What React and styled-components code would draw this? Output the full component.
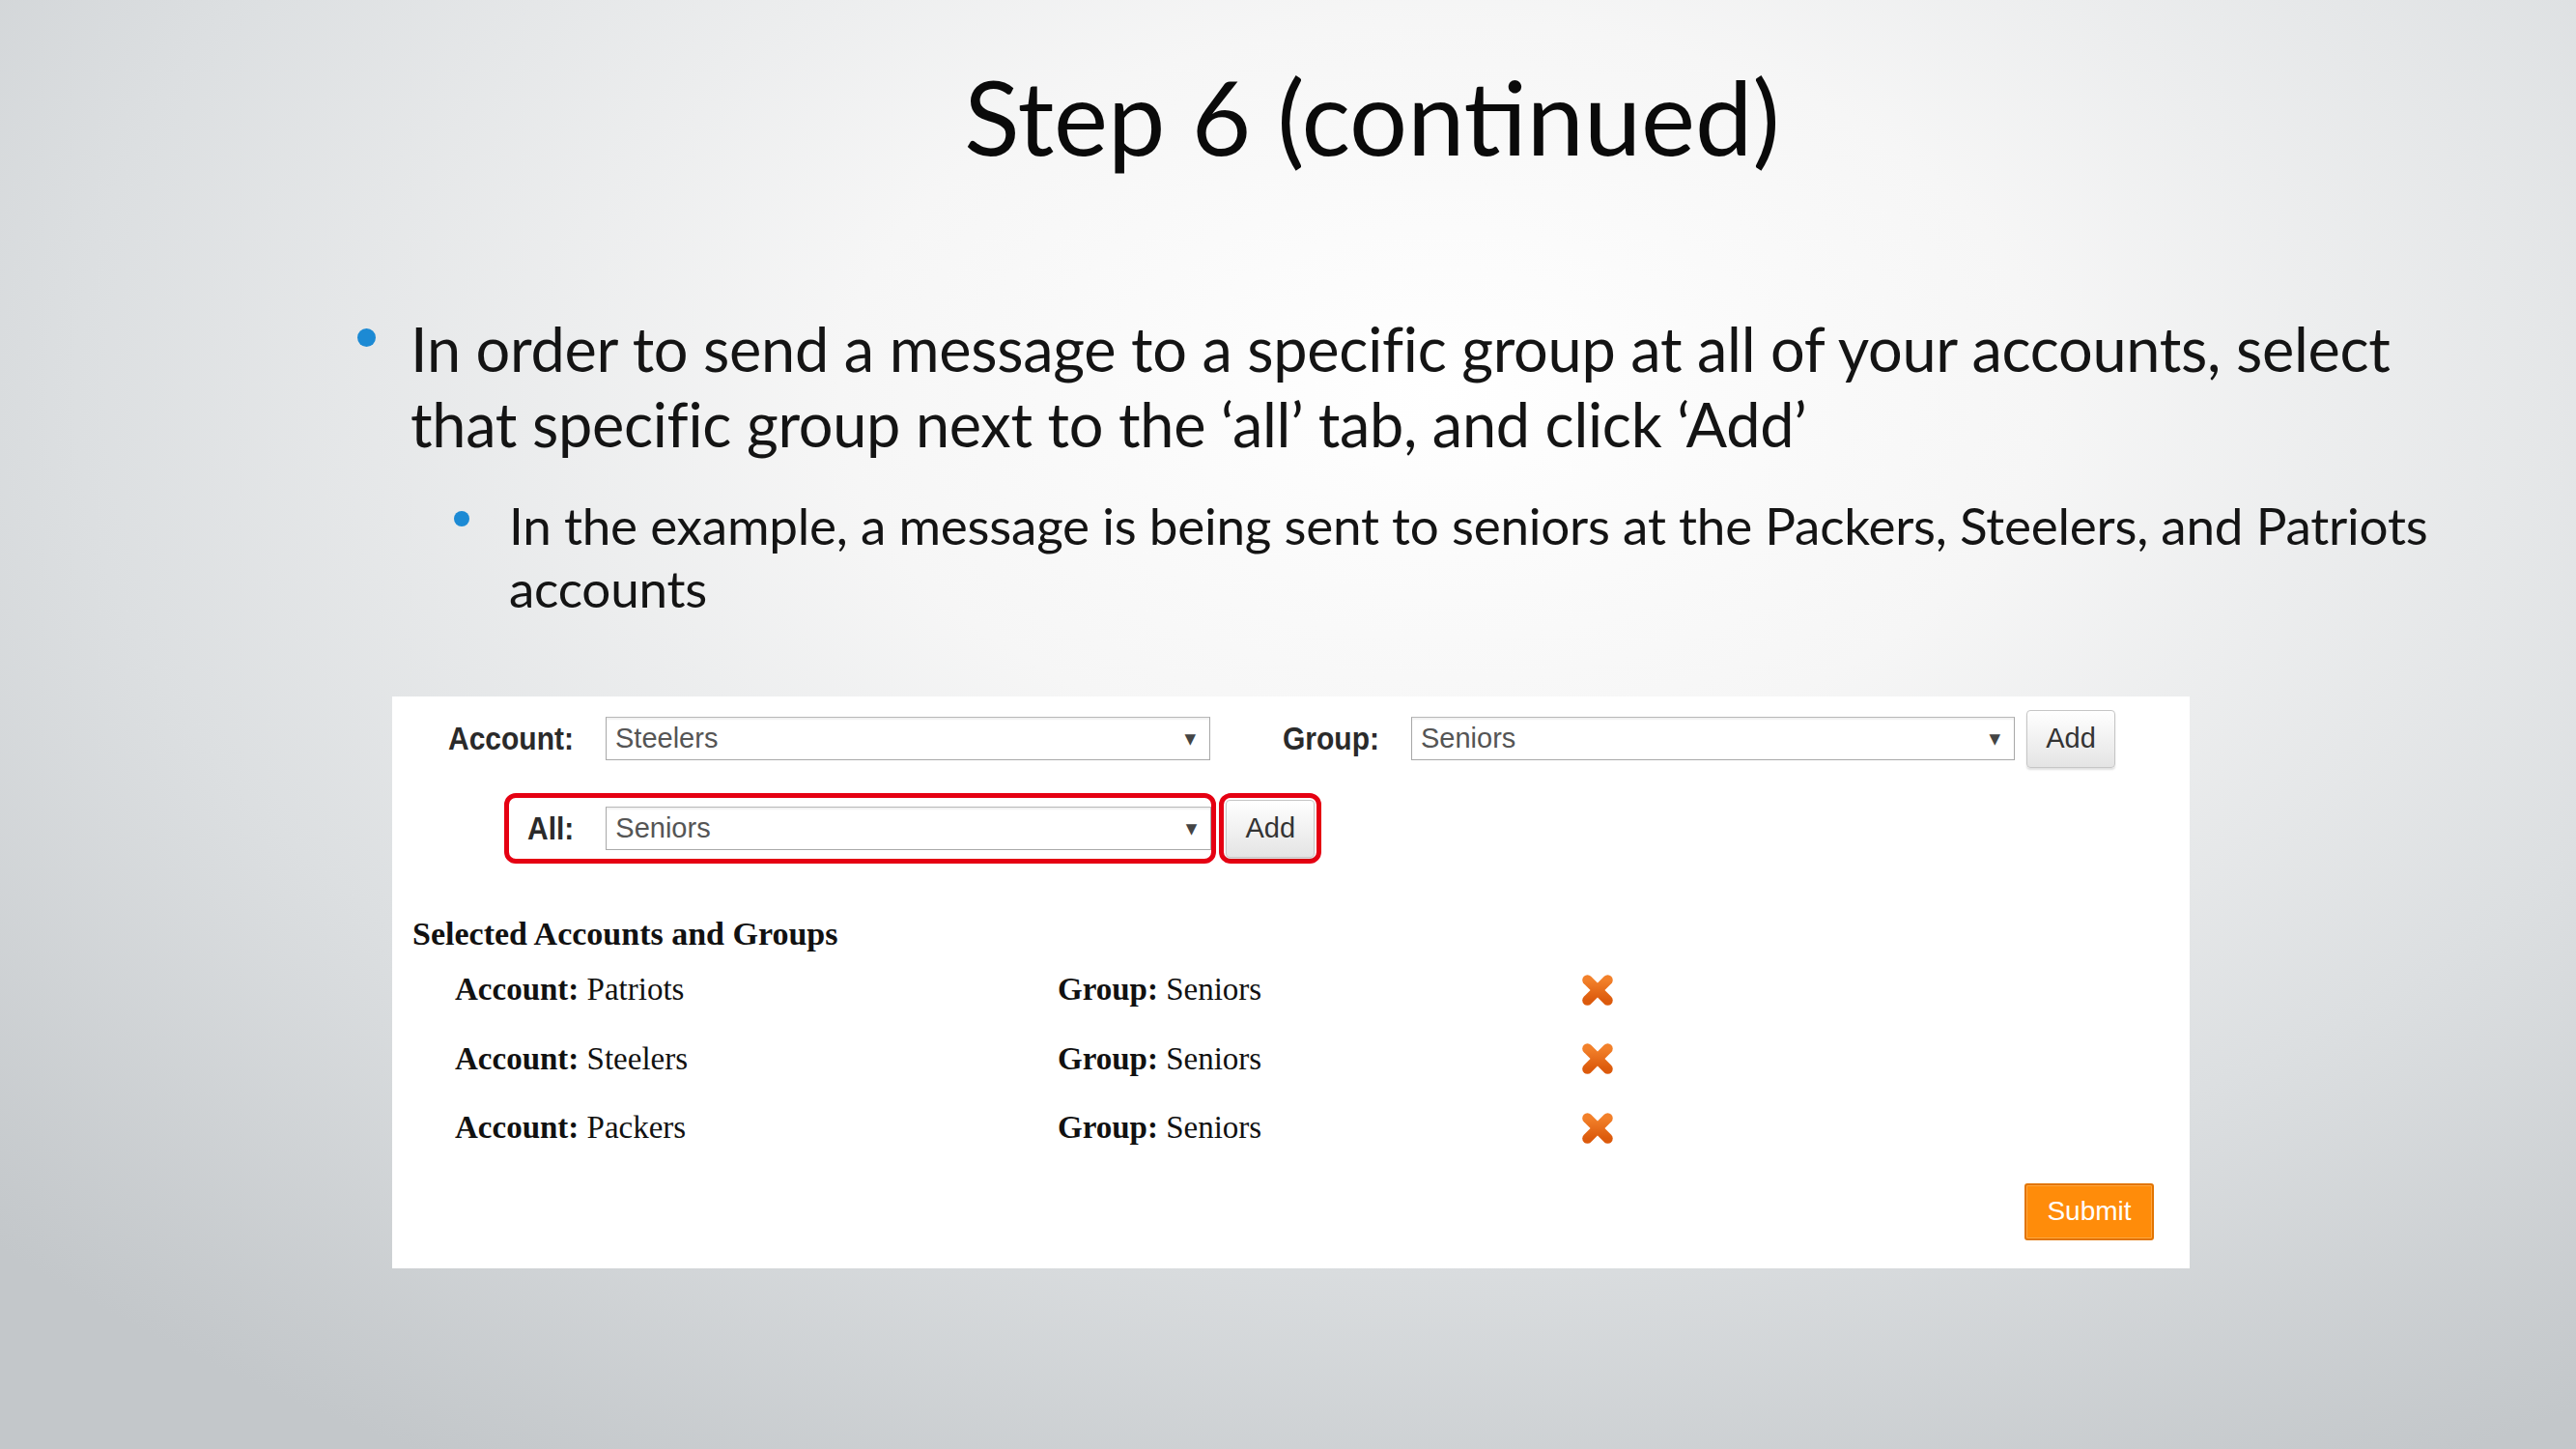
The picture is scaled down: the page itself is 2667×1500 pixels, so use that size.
import styled, { createGlobalStyle } from "styled-components"

const GlobalStyle = createGlobalStyle`
  html, body {
    margin: 0;
    padding: 0;
  }
  body {
    font-family: Lato, "Open Sans", sans-serif;
  }
`

const SELECTED = [
  { account: "Patriots", group: "Seniors" },
  { account: "Steelers", group: "Seniors" },
  { account: "Packers", group: "Seniors" },
]

function RemoveIcon() {
  return (
    <svg width="36" height="36" viewBox="0 0 24 24">
      <defs>
        <linearGradient id="xgrad" x1="0" y1="0" x2="0" y2="1">
          <stop offset="0" stopColor="#f2802a" />
          <stop offset="1" stopColor="#dc5a0c" />
        </linearGradient>
      </defs>
      <g stroke="url(#xgrad)" strokeWidth="7" strokeLinecap="round">
        <line x1="5" y1="5" x2="19" y2="19" />
        <line x1="19" y1="5" x2="5" y2="19" />
      </g>
    </svg>
  )
}

function Select({ value, width }) {
  return (
    <SelectBox $width={width}>
      <span>{value}</span>
      <Arrow>▼</Arrow>
    </SelectBox>
  )
}

export default function App() {
  return (
    <>
      <GlobalStyle />
      <Slide>
        <Title>Step 6 (continued)</Title>

        <Bullet>
          <Dot />
          <BulletText>
            In order to send a message to a specific group at all of your accounts, select
            <br />
            that specific group next to the ‘all’ tab, and click ‘Add’
          </BulletText>
        </Bullet>

        <SubBullet>
          <SubDot />
          <SubText>
            In the example, a message is being sent to seniors at the Packers, Steelers, and Patriots
            <br />
            accounts
          </SubText>
        </SubBullet>

        <Panel>
          <FieldRow>
            <Label>Account:</Label>
            <Select value="Steelers" width={626} />
            <Label $gapLeft={75}>Group:</Label>
            <Select value="Seniors" width={625} />
            <AddButton $gapLeft={12}>Add</AddButton>
          </FieldRow>

          <AllRow>
            <Highlight $pad="0 0 0 19px">
              <Label>All:</Label>
              <Select value="Seniors" width={627} />
            </Highlight>
            <Highlight $pad="0 2px">
              <AddButton>Add</AddButton>
            </Highlight>
          </AllRow>

          <SectionTitle>Selected Accounts and Groups</SectionTitle>
          <SelectedList>
            {SELECTED.map((item) => (
              <SelectedRow key={item.account}>
                <span>
                  <b>Account:</b> {item.account}
                </span>
                <span>
                  <b>Group:</b> {item.group}
                </span>
                <RemoveIcon />
              </SelectedRow>
            ))}
          </SelectedList>

          <Footer>
            <SubmitButton>Submit</SubmitButton>
          </Footer>
        </Panel>
      </Slide>
    </>
  )
}

const Slide = styled.div`
  width: 2667px;
  height: 1500px;
  overflow: hidden;
  display: flex;
  flex-direction: column;
  background: radial-gradient(
    ellipse 78% 85% at 56% 27%,
    #ffffff 0%,
    #f6f6f6 30%,
    #dcdfe1 68%,
    #c3c7ca 100%
  );
  color: #111;
`

const Title = styled.h1`
  margin: 70px 0 0 0;
  padding-left: 174px;
  font-family: Lato, sans-serif;
  font-weight: 400;
  font-size: 106px;
  line-height: 100px;
  text-align: center;
  color: #0a0a0a;
`

const Bullet = styled.div`
  display: flex;
  align-items: flex-start;
  margin: 152px 0 0 370px;
`

const Dot = styled.span`
  flex: none;
  width: 19px;
  height: 19px;
  margin-top: 18px;
  margin-right: 36px;
  border-radius: 50%;
  background: #1c8ad4;
`

const BulletText = styled.div`
  font-size: 63px;
  line-height: 78px;
  letter-spacing: -0.28px;
  color: #141414;
  white-space: nowrap;
`

const SubBullet = styled.div`
  display: flex;
  align-items: flex-start;
  margin: 33px 0 0 470px;
`

const SubDot = styled(Dot)`
  width: 16px;
  height: 16px;
  margin-top: 18px;
  margin-right: 41px;
`

const SubText = styled.div`
  font-size: 53px;
  line-height: 65px;
  letter-spacing: -0.22px;
  color: #141414;
  white-space: nowrap;
`

const Panel = styled.div`
  margin: 80px 0 0 406px;
  width: 1861px;
  height: 592px;
  background: #ffffff;
  display: flex;
  flex-direction: column;
  font-family: "Liberation Sans", Arial, sans-serif;
`

const FieldRow = styled.div`
  display: flex;
  align-items: center;
  height: 59px;
  margin-top: 14px;
  padding-left: 58px;
`

const Label = styled.span`
  font-weight: 700;
  font-size: 30px;
  color: #2a2a2a;
  margin-left: ${(p) => p.$gapLeft || 0}px;
  margin-right: 33px;
  transform: scaleY(1.1);
`

const SelectBox = styled.div`
  box-sizing: border-box;
  width: ${(p) => p.$width}px;
  height: 45px;
  display: flex;
  align-items: center;
  justify-content: space-between;
  padding: 0 14px 0 9px;
  background: #fff;
  border: 1px solid #a9a9a9;
  border-top-color: #b8b8b8;
  box-shadow: inset 0 2px 2px rgba(0, 0, 0, 0.06);
  font-size: 29px;
  color: #555;
`

const Arrow = styled.span`
  font-family: "DejaVu Sans", sans-serif;
  font-size: 15px;
  color: #444;
`

const AddButton = styled.button`
  box-sizing: border-box;
  width: 92px;
  height: 60px;
  margin-left: ${(p) => p.$gapLeft || 0}px;
  padding: 0;
  border: 1px solid #c6c6c6;
  border-radius: 4px;
  background: linear-gradient(#ffffff, #e4e4e4);
  box-shadow: 0 2px 2px rgba(0, 0, 0, 0.12);
  font-family: "Liberation Sans", Arial, sans-serif;
  font-size: 29px;
  color: #333;
`

const AllRow = styled.div`
  display: flex;
  gap: 3px;
  margin: 27px 0 0 116px;
`

const Highlight = styled.div`
  box-sizing: border-box;
  height: 73px;
  display: flex;
  align-items: center;
  padding: ${(p) => p.$pad};
  border: 5px solid #e50012;
  border-radius: 12px;
`

const SectionTitle = styled.div`
  margin: 53px 0 0 21px;
  font-family: "Liberation Serif", "Times New Roman", serif;
  font-weight: 700;
  font-size: 34px;
  line-height: 40px;
  color: #111;
`

const SelectedList = styled.div`
  display: flex;
  flex-direction: column;
  margin-top: 2px;
`

const SelectedRow = styled.div`
  display: grid;
  grid-template-columns: 624px 541px 36px;
  align-items: center;
  height: 71.5px;
  padding-left: 65px;
  font-family: "Liberation Serif", "Times New Roman", serif;
  font-size: 33px;
  color: #111;
`

const Footer = styled.div`
  display: flex;
  justify-content: flex-end;
  margin-top: 21px;
  padding-right: 37px;
`

const SubmitButton = styled.button`
  box-sizing: border-box;
  width: 134px;
  height: 59px;
  border: 2px solid #e27400;
  border-radius: 3px;
  background: #ff8c0a;
  box-shadow: inset 0 0 0 1px #ffa640;
  font-family: "Liberation Sans", Arial, sans-serif;
  font-size: 28px;
  color: #fff;
`
